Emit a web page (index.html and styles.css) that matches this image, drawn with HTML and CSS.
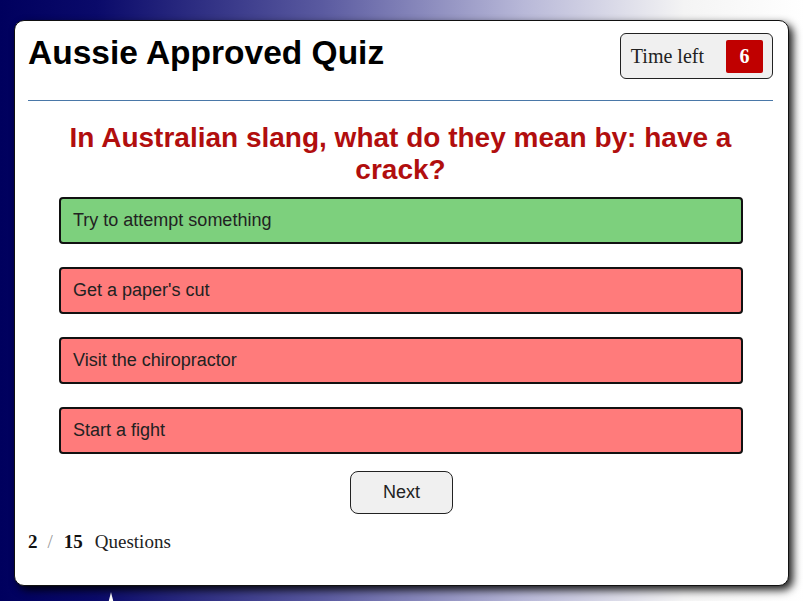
FILE: index.html
```html
<!DOCTYPE html>
<html>
<head>
<meta charset="utf-8">
<link rel="stylesheet" href="styles.css">
</head>
<body>
<div class="card">
  <header class="head">
    <h1 class="title">Aussie Approved Quiz</h1>
    <div class="timer"><span class="timer-label">Time left</span><span class="timer-sec">6</span></div>
  </header>
  <hr class="rule">
  <h2 class="question">In Australian slang, what do they mean by: have a crack?</h2>
  <div class="options">
    <div class="option correct">Try to attempt something</div>
    <div class="option wrong">Get a paper's cut</div>
    <div class="option wrong">Visit the chiropractor</div>
    <div class="option wrong">Start a fight</div>
  </div>
  <div class="actions"><button class="next">Next</button></div>
  <div class="count"><b>2</b><span class="slash">/</span><b>15</b><span class="label">Questions</span></div>
</div>
</body>
</html>
```

FILE: styles.css
```css
html, body {
  margin: 0;
  padding: 0;
}
body {
  width: 805px;
  height: 601px;
  overflow: hidden;
  background:
    url("data:image/svg+xml;utf8,<svg xmlns='http://www.w3.org/2000/svg' width='30' height='30' viewBox='0 0 30 30'><polygon points='15,0 17.5,10 27,10 19.5,16 22,26 15,20 8,26 10.5,16 3,10 12.5,10' fill='white'/></svg>") no-repeat 96px 592px,
    linear-gradient(to right, #00005e 0%, #0a0a6a 12%, #5a5aa0 40%, #b8b8d8 65%, #f4f4f4 85%, #ffffff 100%);
  font-family: "Liberation Sans", Arial, sans-serif;
}
.card {
  box-sizing: border-box;
  width: 775px;
  height: 566px;
  margin: 20px 16px 0 14px;
  padding: 0 15px 0 13px;
  background: #fff;
  border: 1px solid #111;
  border-radius: 10px;
  box-shadow: 4px 4px 9px rgba(0, 0, 0, 0.9);
}
.head {
  display: flex;
  justify-content: space-between;
  align-items: flex-start;
  padding-top: 12px;
}
.title {
  margin: 0;
  font-size: 33.5px;
  line-height: 40px;
  font-weight: bold;
  color: #000;
}
.timer {
  display: flex;
  align-items: center;
  box-sizing: border-box;
  height: 46px;
  padding: 0 9px 0 10px;
  border: 1px solid #222;
  border-radius: 6px;
  background: #f0f0f0;
  font-family: "Liberation Serif", "Times New Roman", serif;
  font-size: 20px;
}
.timer-label {
  color: #222;
}
.timer-sec {
  display: flex;
  align-items: center;
  justify-content: center;
  width: 37px;
  height: 33px;
  margin-left: 22px;
  background: #c00000;
  color: #fff;
  font-weight: bold;
  border-radius: 2px;
}
.rule {
  margin: 21px 0 0;
  border: 0;
  height: 1px;
  background: #4a78a8;
}
.question {
  margin: 21px 20px 0 20px;
  font-size: 28px;
  line-height: 32px;
  font-weight: bold;
  text-align: center;
  color: #b10e0e;
}
.options {
  display: flex;
  flex-direction: column;
  gap: 23px;
  margin: 11px 30px 0 31px;
}
.option {
  box-sizing: border-box;
  height: 47px;
  display: flex;
  align-items: center;
  padding: 0 12px;
  border: 2px solid #111;
  border-radius: 4px;
  font-size: 18px;
  color: #222;
}
.correct {
  background: #7dd07d;
}
.wrong {
  background: #ff7b7b;
}
.actions {
  display: flex;
  justify-content: center;
  margin-top: 17px;
  padding-left: 2px;
}
.next {
  box-sizing: border-box;
  width: 103px;
  height: 43px;
  background: #f0f0f0;
  border: 1px solid #222;
  border-radius: 8px;
  font-family: "Liberation Sans", Arial, sans-serif;
  font-size: 18px;
  color: #222;
}
.count {
  display: flex;
  align-items: baseline;
  margin-top: 17px;
  font-family: "Liberation Serif", "Times New Roman", serif;
  font-size: 19px;
  color: #111;
}
.slash {
  margin: 0 11px 0 10px;
  color: #999;
}
.label {
  margin-left: 12px;
  color: #222;
}
```
